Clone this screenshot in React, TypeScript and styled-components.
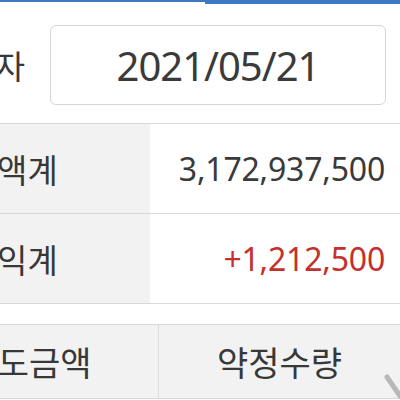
import styled, { createGlobalStyle } from 'styled-components';

const GlobalStyle = createGlobalStyle`
  html, body {
    margin: 0;
    padding: 0;
    background: #ffffff;
    overflow: hidden;
  }
  body {
    font-family: "Noto Sans", "Noto Sans CJK KR", sans-serif;
    color: #383838;
  }
`;

const Screen = styled.div`
  position: relative;
  width: 400px;
  height: 400px;
  overflow: hidden;
`;

const Page = styled.div`
  width: 500px;
  margin-left: -100px;
`;

const TabBar = styled.div`
  display: grid;
  grid-template-columns: 305px 1fr;
  height: 4px;
`;

const Tab = styled.div<{ $active?: boolean }>`
  border-top: ${(p) => (p.$active ? '4px' : '2px')} solid #3c78c3;
  box-sizing: border-box;
`;

const DateRow = styled.div`
  display: flex;
  align-items: center;
  gap: 25px;
  margin: 21px 14px 18px 0;
`;

const DateLabel = styled.div`
  width: 125px;
  text-align: right;
  font-family: "Noto Sans CJK KR", sans-serif;
  font-size: 33px;
  white-space: nowrap;
`;

const DateBox = styled.div`
  flex: 1;
  height: 80px;
  box-sizing: border-box;
  border: 1px solid #d6d6d6;
  border-radius: 6px;
  display: flex;
  align-items: center;
  justify-content: center;
  font-size: 40px;
  letter-spacing: -1px;
  color: #3a3a3a;
`;

const SummaryTable = styled.div`
  border-top: 1px solid #d8d8d8;
`;

const SummaryRow = styled.div`
  display: grid;
  grid-template-columns: 250px 1fr;
  height: 89px;
  border-bottom: 1px solid #d8d8d8;
`;

const LabelCell = styled.div`
  background: #f2f2f2;
  display: flex;
  align-items: center;
  padding-left: 6px;
  font-family: "Noto Sans CJK KR", sans-serif;
  font-size: 33px;
  white-space: nowrap;
  overflow: hidden;
`;

const ValueCell = styled.div<{ $tone?: 'up' }>`
  display: flex;
  align-items: center;
  justify-content: flex-end;
  padding-right: 15px;
  font-size: 32px;
  letter-spacing: -0.2px;
  color: ${(p) => (p.$tone === 'up' ? '#c4302b' : '#3a3a3a')};
`;

const ListHeader = styled.div`
  display: grid;
  grid-template-columns: 258px 1fr;
  margin-top: 20px;
  height: 73px;
  border-top: 1px solid #d8d8d8;
  border-bottom: 1px solid #d8d8d8;
  background: #f2f2f2;
`;

const HeadCell = styled.div`
  display: flex;
  align-items: center;
  justify-content: center;
  font-family: "Noto Sans CJK KR", sans-serif;
  font-size: 34px;
  white-space: nowrap;
  & + & {
    border-left: 1px solid #dcdcdc;
  }
`;

const ScrollHint = styled.svg`
  position: absolute;
  right: 0;
  bottom: 0;
`;

export default function App() {
  return (
    <Screen>
      <GlobalStyle />
      <Page>
        <TabBar>
          <Tab />
          <Tab $active />
        </TabBar>
        <DateRow>
          <DateLabel>기준일자</DateLabel>
          <DateBox>2021/05/21</DateBox>
        </DateRow>
        <SummaryTable>
          <SummaryRow>
            <LabelCell>평가금액계</LabelCell>
            <ValueCell>3,172,937,500</ValueCell>
          </SummaryRow>
          <SummaryRow>
            <LabelCell>평가수익계</LabelCell>
            <ValueCell $tone="up">+1,212,500</ValueCell>
          </SummaryRow>
        </SummaryTable>
        <ListHeader>
          <HeadCell>매도금액</HeadCell>
          <HeadCell>약정수량</HeadCell>
        </ListHeader>
      </Page>
      <ScrollHint width="16" height="26" viewBox="0 0 16 26">
        <line x1="3" y1="3" x2="16" y2="22" stroke="#b8b8b8" strokeWidth="5" strokeLinecap="round" />
      </ScrollHint>
    </Screen>
  );
}
